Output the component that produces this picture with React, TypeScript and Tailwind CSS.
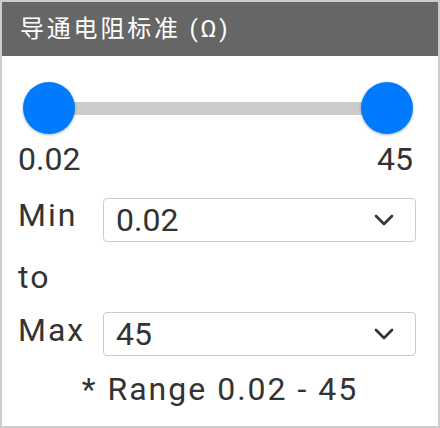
import React from 'react';

const Chevron = () => (
  <svg width="20" height="12" viewBox="0 0 20 12" fill="none">
    <path d="M2 2l8 8 8-8" stroke="#333333" strokeWidth="2.6" strokeLinecap="round" strokeLinejoin="round" />
  </svg>
);

const SelectBox = ({ value }: { value: string }) => (
  <div className="w-[313px] h-[44px] border border-[#cccccc] rounded-[4px] flex items-center justify-between pl-[12px] pr-[21px]">
    <span>{value}</span>
    <Chevron />
  </div>
);

export default function App() {
  return (
    <div className="w-[440px] h-[428px] border-2 border-[#cccccc] bg-white text-[#333333] font-['Roboto','Noto_Sans_CJK_SC',sans-serif] overflow-hidden">
      <div className="h-[54px] bg-[#666666] text-white text-[24px] tracking-[2.8px] pl-[18px] flex items-center">
        导通电阻标准 (Ω)
      </div>
      <div className="pl-[16px] w-[416px] text-[32px] leading-[32px]">
        {/* range slider */}
        <div className="relative mt-[26px] h-[52px] ml-[5px] mr-[5px]">
          <div className="absolute left-[26px] right-[26px] top-[20px] h-[13px] bg-[#cccccc]" />
          <div className="relative flex justify-between">
            <div className="w-[52px] h-[52px] rounded-full bg-[#007aff] shadow-[0_1px_3px_rgba(0,0,0,0.3)]" />
            <div className="w-[52px] h-[52px] rounded-full bg-[#007aff] shadow-[0_1px_3px_rgba(0,0,0,0.3)]" />
          </div>
        </div>
        <div className="mt-[9px] flex justify-between mr-[5px]">
          <span>0.02</span>
          <span>45</span>
        </div>

        <div className="mt-[23px] flex items-start">
          <span className="w-[85px] pt-[1px] tracking-[2px]">Min</span>
          <SelectBox value="0.02" />
        </div>
        <div className="mt-[19px] tracking-[2px]">to</div>
        <div className="mt-[19px] flex items-start">
          <span className="w-[85px] pt-[2px] tracking-[2px]">Max</span>
          <SelectBox value="45" />
        </div>
        <div className="mt-[17px] text-center pl-[4px] tracking-[2px]">* Range 0.02 - 45</div>
      </div>
    </div>
  );
}
